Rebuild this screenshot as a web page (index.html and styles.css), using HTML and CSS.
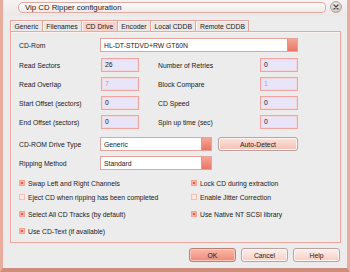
FILE: index.html
```html
<!DOCTYPE html>
<html>
<head>
<meta charset="utf-8">
<link rel="stylesheet" href="styles.css">
</head>
<body>
<div class="window">
  <div class="titlebar">
    <div class="title-pill"><span>Vip CD Ripper configuration</span></div>
    <div class="close">
      <svg width="12" height="12" viewBox="0 0 12 12"><defs><radialGradient id="g" cx="45%" cy="35%" r="65%"><stop offset="0" stop-color="#f4f2f2"/><stop offset="1" stop-color="#c9c2c2"/></radialGradient></defs><circle cx="6" cy="6" r="5.5" fill="url(#g)" stroke="#a39797" stroke-width="0.8"/><path d="M4 4 L8 8 M8 4 L4 8" stroke="#4a4242" stroke-width="1.3" stroke-linecap="round"/></svg>
    </div>
  </div>
  <div class="body">
    <div class="tabs">
      <div class="tab">Generic</div>
      <div class="tab">Filenames</div>
      <div class="tab active">CD Drive</div>
      <div class="tab">Encoder</div>
      <div class="tab">Local CDDB</div>
      <div class="tab">Remote CDDB</div>
    </div>
    <div class="panel">
      <div class="row-cdrom">
        <span class="label">CD-Rom</span>
        <div class="combo"><span>HL-DT-STDVD+RW GT60N</span><i class="drop"></i></div>
      </div>
      <div class="numgrid">
        <span class="label">Read Sectors</span><div class="field">26</div>
        <span class="label">Number of Retries</span><div class="field">0</div>
        <span class="label">Read Overlap</span><div class="field disabled">7</div>
        <span class="label">Block Compare</span><div class="field disabled">1</div>
        <span class="label">Start Offset (sectors)</span><div class="field">0</div>
        <span class="label">CD Speed</span><div class="field">0</div>
        <span class="label">End Offset (sectors)</span><div class="field">0</div>
        <span class="label">Spin up time (sec)</span><div class="field">0</div>
      </div>
      <div class="row-type">
        <span class="label">CD-ROM Drive Type</span>
        <div class="combo short"><span>Generic</span><i class="drop"></i></div>
        <div class="btn auto">Auto-Detect</div>
      </div>
      <div class="row-type second">
        <span class="label">Ripping Method</span>
        <div class="combo short"><span>Standard</span><i class="drop"></i></div>
      </div>
      <div class="checks">
        <div class="check"><i class="box on"></i><span>Swap Left and Right Channels</span></div>
        <div class="check"><i class="box on"></i><span>Lock CD during extraction</span></div>
        <div class="check"><i class="box"></i><span>Eject CD when ripping has been completed</span></div>
        <div class="check"><i class="box"></i><span>Enable Jitter Correction</span></div>
        <div class="check"><i class="box on"></i><span>Select All CD Tracks (by default)</span></div>
        <div class="check"><i class="box on"></i><span>Use Native NT SCSI library</span></div>
        <div class="check"><i class="box on"></i><span>Use CD-Text (if available)</span></div>
      </div>
    </div>
    <div class="buttons">
      <div class="btn ok">OK</div>
      <div class="btn">Cancel</div>
      <div class="btn">Help</div>
    </div>
  </div>
</div>
</body>
</html>
```
FILE: styles.css
```css
* { box-sizing: border-box; margin: 0; padding: 0; }
html, body { width: 350px; height: 272px; overflow: hidden; }
body {
  font-family: "Liberation Sans", Arial, sans-serif;
  font-size: 6.8px;
  color: #1a1a1a;
  background: #ececec;
}
.window {
  width: 350px;
  height: 272px;
  display: flex;
  flex-direction: column;
  background: #ececec;
  border-left: 3px solid #e9ab9c;
  border-right: 3px solid #e9ab9c;
  border-bottom: 4px solid #cf8d7c;
}
.titlebar {
  height: 16px;
  display: flex;
  align-items: flex-start;
  background: linear-gradient(#f7f3f3, #ece8e8);
}
.title-pill {
  margin-left: 15px;
  margin-top: 2px;
  width: 308px;
  height: 11px;
  border: 1px solid #e3aaa2;
  border-radius: 5px 4px 4px 5px;
  background: linear-gradient(#fcfafa, #efebeb);
  display: flex;
  align-items: center;
  padding-left: 6px;
  font-size: 7.8px;
  color: #222;
}
.close {
  margin-left: 4px;
  margin-top: 1px;
  width: 12px;
  height: 12px;
  display: flex;
}
.body {
  flex: 1;
  display: flex;
  flex-direction: column;
  padding: 4px 6px 0 7px;
}
.tabs {
  display: flex;
  height: 11px;
}
.tab {
  height: 11px;
  padding: 0 3.5px;
  border: 1px solid #e7a59c;
  border-bottom: none;
  box-shadow: inset 1px 1px 0 #fbf4f3;
  background: #ebe7e7;
  display: flex;
  align-items: center;
  margin-right: -1px;
  white-space: nowrap;
}
.tab.active {
  background: #f7d2ca;
}
.panel {
  height: 212px;
  border: 1px solid #eea79f;
  box-shadow: inset 1px 1px 0 #fbf2f0;
  padding: 6px 0 0 8px;
  display: flex;
  flex-direction: column;
}
.label { white-space: nowrap; }
.row-cdrom {
  display: grid;
  grid-template-columns: 81px 198px;
  align-items: center;
  height: 14px;
}
.combo {
  height: 14px;
  border: 1px solid #e4a39c;
  background: #fff;
  display: flex;
  align-items: center;
  justify-content: space-between;
  padding-left: 3px;
}
.combo.short { width: 112px; }
.drop {
  width: 10px;
  height: 12px;
  background: linear-gradient(#f6a595, #ea7565);
  border-left: 1px solid #e79585;
}
.numgrid {
  margin-top: 6px;
  display: grid;
  grid-template-columns: 82px 57px 102px 38px;
  grid-auto-rows: 14px;
  row-gap: 5px;
  align-items: center;
}
.field {
  width: 38px;
  height: 14px;
  border: 1px solid #f0a4a0;
  box-shadow: inset 0 0 0 1px #f7d9dc;
  background: #e7e5f7;
  padding: 1px 0 0 3px;
  line-height: 9px;
}
.field.disabled { color: #a9a5b9; }
.row-type {
  margin-top: 8px;
  display: flex;
  align-items: center;
  height: 14px;
}
.row-type.second { margin-top: 5px; }
.row-type .label { width: 81px; }
.btn {
  height: 14px;
  width: 47px;
  border: 1px solid #bba2a0;
  border-radius: 3px;
  background: linear-gradient(#fdf0ec, #f6cec4);
  box-shadow: inset 0 0 0 1px #fff6f4;
  display: flex;
  align-items: center;
  justify-content: center;
}
.btn.auto {
  width: 80px;
  margin-left: 6px;
  background: linear-gradient(#fbe2dc, #f4c0b4);
}
.btn.ok {
  border-color: #b98078;
  background: linear-gradient(#fbb8a8, #ee8a7a);
  box-shadow: inset 0 0 0 1px #fcc8bc;
}
.checks {
  margin-top: 8px;
  display: grid;
  grid-template-columns: 172px 1fr;
  grid-template-rows: 14px 17px 17px 10px;
  align-items: start;
}
.check {
  height: 10px;
  display: flex;
  align-items: center;
  gap: 3px;
  white-space: nowrap;
}
.box {
  width: 6px;
  height: 6px;
  border: 1px solid #f2c0b6;
  background: #fde6de;
  display: flex;
  align-items: center;
  justify-content: center;
}
.box.on {
  background: #f7b4a6;
  border-color: #f3a496;
}
.box.on::after {
  content: "";
  width: 2px;
  height: 2px;
  background: #e45a48;
}
.buttons {
  margin-top: 5px;
  display: flex;
  justify-content: flex-end;
  gap: 5px;
  padding-right: 1px;
}
```
